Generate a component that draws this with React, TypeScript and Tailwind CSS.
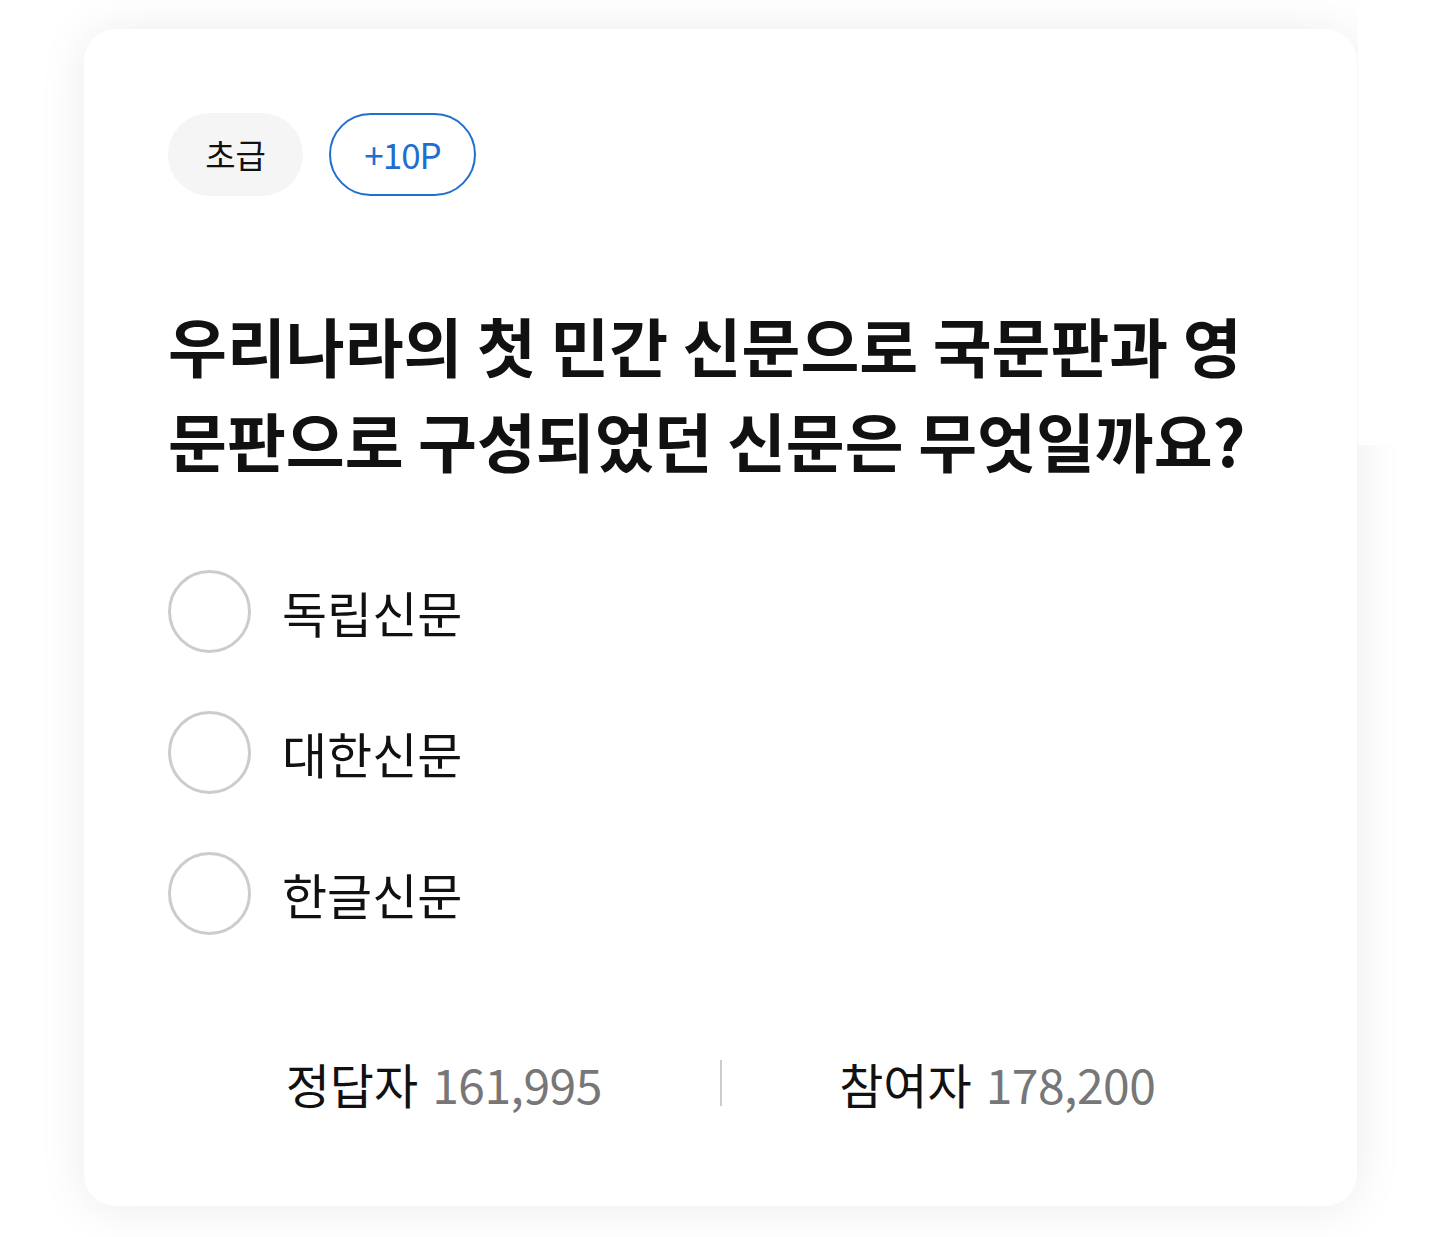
const FONT = { fontFamily: '"Noto Sans CJK KR", "Noto Sans", sans-serif' }

const OPTIONS = ['독립신문', '대한신문', '한글신문']

function Option({ label }: { label: string }) {
  return (
    <label className="flex items-center gap-[31px] cursor-pointer">
      <span className="w-[83px] h-[83px] rounded-full border-[3px] border-[#cccccc] bg-white shrink-0" />
      <span className="text-[49px] leading-none text-[#111111]">{label}</span>
    </label>
  )
}

function Stat({ name, value }: { name: string; value: string }) {
  return (
    <div className="flex items-center justify-center gap-[14px] text-[48px] leading-[60px]">
      <span className="text-[#111111]">{name}</span>
      <span className="text-[#777777] tracking-[-0.5px]">{value}</span>
    </div>
  )
}

export default function App() {
  return (
    <div className="relative w-[1440px] h-[1237px] bg-white overflow-hidden" style={FONT}>
      <div className="pt-[29px] pl-[84px]">
        <div className="w-[1273px] h-[1177px] bg-white rounded-[32px] shadow-[0_2px_50px_rgba(0,0,0,0.08)] px-[84px] pt-[84px]">
          {/* Tags */}
          <div className="flex items-center gap-[26px]">
            <span className="h-[83px] w-[135px] rounded-full bg-[#f5f5f5] flex items-center justify-center text-[33px] text-[#111111]">초급</span>
            <span className="h-[83px] w-[147px] rounded-full border-[2.5px] border-[#1f6fd1] flex items-center justify-center text-[35px] text-[#1f6fd1] tracking-[-1px]">+10P</span>
          </div>

          {/* Question */}
          <h1 className="mt-[101px] text-[64px] leading-[95px] font-semibold text-[#111111]">
            우리나라의 첫 민간 신문으로 국문판과 영문판으로 구성되었던 신문은 무엇일까요?
          </h1>

          {/* Options */}
          <div className="mt-[83px] flex flex-col gap-[58px]">
            {OPTIONS.map((o) => (
              <Option key={o} label={o} />
            ))}
          </div>

          {/* Stats */}
          <div className="mt-[118px] grid grid-cols-[1fr_2px_1fr] items-center">
            <Stat name="정답자" value="161,995" />
            <div className="h-[46px] w-[2px] bg-[#cccccc]" />
            <Stat name="참여자" value="178,200" />
          </div>
        </div>
      </div>
      {/* white patch over the shadow at top right */}
      <div className="absolute left-[1358px] top-0 w-[82px] h-[445px] bg-white" />
    </div>
  )
}
